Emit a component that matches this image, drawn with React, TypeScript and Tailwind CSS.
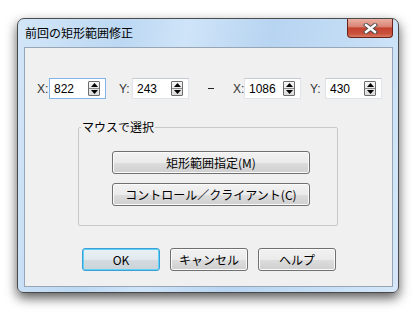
const jp = "font-['Noto_Sans_CJK_JP','Noto_Sans',sans-serif]";

function Spin() {
  return (
    <div className="flex flex-col w-[12px] h-[15px] border border-[#6d6d6d] rounded-[1px] bg-[linear-gradient(#f6f6f6,#dcdcdc)]">
      <div className="flex-1 flex items-center justify-center border-b border-[#8a8a8a]">
        <svg width="7" height="4" viewBox="0 0 7 4">
          <path d="M3.5 0 L7 4 L0 4 Z" fill="#000" />
        </svg>
      </div>
      <div className="flex-1 flex items-center justify-center">
        <svg width="7" height="4" viewBox="0 0 7 4">
          <path d="M0 0 L7 0 L3.5 4 Z" fill="#000" />
        </svg>
      </div>
    </div>
  );
}

function Field({ label, value, focused, labelW }: { label: string; value: string; focused?: boolean; labelW: string }) {
  return (
    <div className="flex items-center">
      <span className={`${labelW} text-[12px] text-[#333] font-['Liberation_Sans',sans-serif]`}>{label}</span>
      <div
        className={
          "flex items-center w-[57px] h-[21px] bg-white border pl-[4px] pr-[5px] " +
          (focused ? "border-[#7eb4ea]" : "border-[#dfe3ea] border-t-[#c5c9d0]")
        }
      >
        <span className="flex-1 text-[12px] text-black font-['Liberation_Sans',sans-serif] leading-none">{value}</span>
        <Spin />
      </div>
    </div>
  );
}

function Btn({ children, w, def }: { children: React.ReactNode; w: string; def?: boolean }) {
  return (
    <div
      className={
        `${w} h-[23px] flex items-center justify-center rounded-[3px] border text-[12px] text-black ${jp} ` +
        (def
          ? "border-[#3c9fd8] shadow-[inset_0_0_0_1px_#5fd3f5] bg-[linear-gradient(#eaf1f5_0%,#e2e9ee_50%,#d3dbe0_51%,#cbd3d8_100%)]"
          : "border-[#707070] shadow-[inset_0_0_0_1px_#fbfbfb] bg-[linear-gradient(#f2f2f2_0%,#ebebeb_50%,#dddddd_51%,#cfcfcf_100%)]")
      }
    >
      {children}
    </div>
  );
}

export default function App() {
  return (
    <div className="w-[420px] h-[312px] bg-white pt-[18px] pl-[17px]">
      <div className="w-[382px] h-[275px] flex flex-col rounded-t-[7px] rounded-b-[6px] border border-[#4a4a4a] shadow-[0_5px_12px_rgba(0,0,0,0.65)] bg-[linear-gradient(100deg,#d3e6f8_0%,#bcd8f3_25%,#cfe4f8_40%,#b7d4f1_60%,#c4ddf5_80%,#d6e8f9_100%)]">
        <div className="flex h-[28px]">
          <div className={`flex-1 pl-[7px] pt-[7px] text-[12px] leading-[14px] text-black ${jp}`}>前回の矩形範囲修正</div>
          <div className="mr-[5px] w-[46px] h-[19px] flex items-center justify-center rounded-b-[4px] border border-t-0 border-[#6a2318] bg-[linear-gradient(#eab0a2_0%,#d98575_42%,#c4432f_50%,#c9503b_80%,#d97a62_100%)]">
            <svg width="15" height="11" viewBox="0 0 15 11">
              <path d="M3 2 L12 9 M12 2 L3 9" stroke="#4a4a4a" strokeWidth="4.2" strokeLinecap="square" />
              <path d="M3 2 L12 9 M12 2 L3 9" stroke="#fff" strokeWidth="2.4" strokeLinecap="square" />
            </svg>
          </div>
        </div>
        <div className="ml-[6px] mr-[5px] h-[240px] border border-[#97a6b6] bg-[#f0f0f0] flex flex-col">
          <div className="mt-[30px] pl-[12px] flex items-center h-[21px]">
            <Field label="X:" value="822" focused labelW="w-[12px]" />
            <div className="ml-[13px]">
              <Field label="Y:" value="243" labelW="w-[13px]" />
            </div>
            <span className="ml-[19px] w-[6px] h-[1px] bg-[#222]" />
            <div className="ml-[19px]">
              <Field label="X:" value="1086" labelW="w-[11px]" />
            </div>
            <div className="ml-[9px]">
              <Field label="Y:" value="430" labelW="w-[15px]" />
            </div>
          </div>
          <fieldset className="mt-[21px] ml-[53px] w-[260px] h-[106px] border border-[#c6c8cc] rounded-[2px] px-0">
            <legend className={`ml-[2px] px-[1px] text-[12px] leading-[14px] text-black ${jp}`}>マウスで選択</legend>
            <div className="ml-[33px] mt-[17px] flex flex-col gap-[9px]">
              <Btn w="w-[198px]">矩形範囲指定(M)</Btn>
              <Btn w="w-[198px]">コントロール／クライアント(C)</Btn>
            </div>
          </fieldset>
          <div className="mt-[22px] ml-[57px] flex gap-[10px]">
            <Btn w="w-[78px]" def>OK</Btn>
            <Btn w="w-[78px]">キャンセル</Btn>
            <Btn w="w-[78px]">ヘルプ</Btn>
          </div>
        </div>
      </div>
    </div>
  );
}
